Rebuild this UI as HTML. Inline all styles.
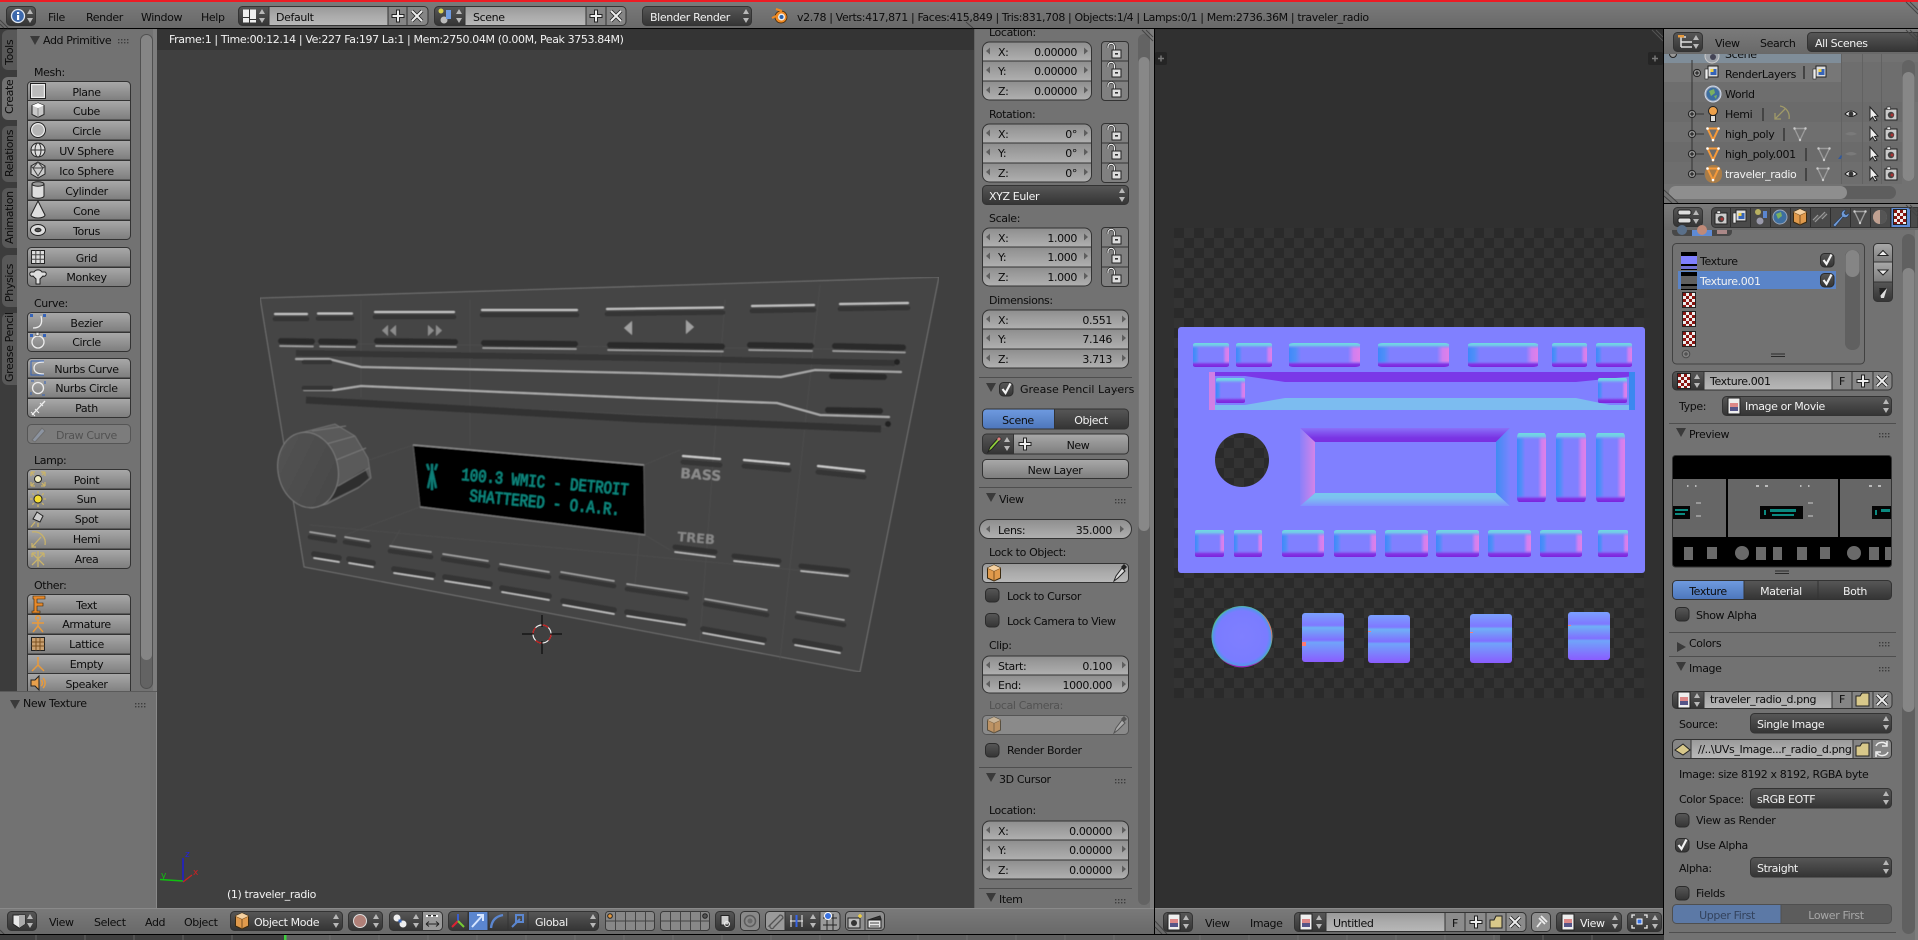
<!DOCTYPE html>
<html><head><meta charset="utf-8"><title>Blender</title>
<style>
html,body{margin:0;padding:0;background:#404040;overflow:hidden}
svg{display:block;width:1918px;height:940px}
text{font-family:"DejaVu Sans","Liberation Sans",sans-serif;font-size:11px;fill:#0c0c0c;letter-spacing:-.38px}
.w{fill:#f2f2f2}.g{fill:#525252}.m{text-anchor:middle}.e{text-anchor:end}
.sep{stroke:#4e4e4e;stroke-width:1;fill:none}
.ol{fill:none;stroke:#2e2e2e;stroke-width:1}
.hatch{stroke:#3a3a3a;stroke-width:1;fill:none}
.hi{stroke:#c2c2c2;stroke-width:2;fill:none;stroke-linecap:round}
.lo{stroke:#a4a4a4;stroke-width:1.4;fill:none;stroke-linecap:round}
.dk{stroke:#2a2a2a;stroke-width:6;fill:none;stroke-linecap:round}
.sd{stroke:#343434;stroke-width:4.5;fill:none;stroke-linecap:round}
.wire{stroke:#4e4e4e;stroke-width:.8;fill:none}
.lcd{font-family:"Liberation Mono","DejaVu Sans Mono",monospace;font-size:14px;fill:#0b8a80;stroke:#0b8a80;stroke-width:.35;letter-spacing:0}
.ti{fill:#3a3a3a}
.arr{fill:#5e5e5e}
.ic{stroke:#1c1c1c;stroke-width:1;fill:#dcdcdc}
.il{stroke:#eee;stroke-width:1.3;fill:none}
.iy{stroke:#c9b36a;stroke-width:1.3;fill:none}
.io{stroke:#e89a3c;stroke-width:1.5;fill:none}
</style></head><body>
<svg xmlns="http://www.w3.org/2000/svg" width="1918" height="940" viewBox="0 0 1918 940">
<defs>
<filter id="bl" x="0" y="0" width="1" height="1"><feGaussianBlur stdDeviation=".55"/></filter>
<linearGradient id="gb" x1="0" y1="0" x2="0" y2="1"><stop offset="0" stop-color="#a9a9a9"/><stop offset="1" stop-color="#7d7d7d"/></linearGradient>
<linearGradient id="gn" x1="0" y1="0" x2="0" y2="1"><stop offset="0" stop-color="#999"/><stop offset=".5" stop-color="#ababab"/><stop offset="1" stop-color="#b8b8b8"/></linearGradient>
<linearGradient id="gd" x1="0" y1="0" x2="0" y2="1"><stop offset="0" stop-color="#575757"/><stop offset="1" stop-color="#343434"/></linearGradient>
<linearGradient id="gs" x1="0" y1="0" x2="0" y2="1"><stop offset="0" stop-color="#6f9be0"/><stop offset="1" stop-color="#4d76bb"/></linearGradient>
<linearGradient id="gh" x1="0" y1="0" x2="0" y2="1"><stop offset="0" stop-color="#7a7a7a"/><stop offset="1" stop-color="#696969"/></linearGradient>
<linearGradient id="gf" x1="0" y1="0" x2="0" y2="1"><stop offset="0" stop-color="#8e8e8e"/><stop offset="1" stop-color="#b0b0b0"/></linearGradient>
<linearGradient id="nh" x1="0" y1="0" x2="1" y2="0"><stop offset="0" stop-color="#3f88fa"/><stop offset=".09" stop-color="#4f8ff8"/><stop offset=".17" stop-color="#8080ff"/><stop offset=".83" stop-color="#8080ff"/><stop offset=".91" stop-color="#d07ff0"/><stop offset="1" stop-color="#e080e8"/></linearGradient>
<linearGradient id="nv" x1="0" y1="0" x2="0" y2="1"><stop offset="0" stop-color="#6fdce0"/><stop offset=".1" stop-color="#74c4ea"/><stop offset=".24" stop-color="#8080ff" stop-opacity="0"/><stop offset=".74" stop-color="#8080ff" stop-opacity="0"/><stop offset=".88" stop-color="#8436e4"/><stop offset="1" stop-color="#7a24dc"/></linearGradient>
<linearGradient id="nvt" x1="0" y1="0" x2="0" y2="1"><stop offset="0" stop-color="#6fdce0"/><stop offset=".05" stop-color="#74c4ea"/><stop offset=".1" stop-color="#8080ff" stop-opacity="0"/><stop offset=".9" stop-color="#8080ff" stop-opacity="0"/><stop offset=".95" stop-color="#8436e4"/><stop offset="1" stop-color="#7a24dc"/></linearGradient>
<linearGradient id="nht" x1="0" y1="0" x2="1" y2="0"><stop offset="0" stop-color="#3f88fa"/><stop offset=".14" stop-color="#4f8ff8"/><stop offset=".28" stop-color="#8080ff"/><stop offset=".72" stop-color="#8080ff"/><stop offset=".86" stop-color="#d07ff0"/><stop offset="1" stop-color="#e080e8"/></linearGradient>
<linearGradient id="ftop" x1="0" y1="0" x2="0" y2="1"><stop offset="0" stop-color="#8a70f8"/><stop offset=".7" stop-color="#7a34e4"/><stop offset="1" stop-color="#7a30e0"/></linearGradient>
<linearGradient id="fbot" x1="0" y1="1" x2="0" y2="0"><stop offset="0" stop-color="#8090ff"/><stop offset=".6" stop-color="#7cc0f0"/><stop offset="1" stop-color="#78c8ee"/></linearGradient>
<linearGradient id="fl" x1="0" y1="0" x2="1" y2="0"><stop offset="0" stop-color="#8a80fa"/><stop offset="1" stop-color="#d484e8"/></linearGradient>
<linearGradient id="fr" x1="1" y1="0" x2="0" y2="0"><stop offset="0" stop-color="#7a84ff"/><stop offset="1" stop-color="#3f8cf2"/></linearGradient>
<linearGradient id="blk" x1="0" y1="0" x2="0" y2="1"><stop offset="0" stop-color="#7aa0ff"/><stop offset=".25" stop-color="#7f78ff"/><stop offset=".3" stop-color="#6fb0f6"/><stop offset=".55" stop-color="#8070ff"/><stop offset=".6" stop-color="#70a4fa"/><stop offset="1" stop-color="#8a5cff"/></linearGradient>
<radialGradient id="knb" cx=".5" cy=".5" r=".5"><stop offset="0" stop-color="#7f7fff"/><stop offset=".84" stop-color="#7a7cff"/><stop offset=".94" stop-color="#5a90f0"/><stop offset="1" stop-color="#50b8a0"/></radialGradient>
<linearGradient id="kface" x1="0" y1="0" x2="1" y2="1"><stop offset="0" stop-color="#545454"/><stop offset="1" stop-color="#474747"/></linearGradient>
<pattern id="chk" width="20" height="20" patternUnits="userSpaceOnUse" x="1174" y="228"><rect width="20" height="20" fill="#333"/><rect width="10" height="10" fill="#2a2a2a"/><rect x="10" y="10" width="10" height="10" fill="#2a2a2a"/></pattern>
<symbol id="nb" viewBox="0 0 100 100" preserveAspectRatio="none" overflow="visible"><rect width="100" height="100" rx="7" fill="url(#nh)"/><rect width="100" height="100" rx="7" fill="url(#nv)"/></symbol>
<symbol id="nt" viewBox="0 0 100 100" preserveAspectRatio="none" overflow="visible"><rect width="100" height="100" rx="7" fill="url(#nht)"/><rect width="100" height="100" rx="7" fill="url(#nvt)"/></symbol>
<g id="la"><path class="arr" d="M4 -3.5 L0 0 4 3.5z"/></g>
<g id="ra"><path class="arr" d="M0 -3.5 L4 0 0 3.5z"/></g>
<g id="bt"><path d="M.5 20V4.5a4 4 0 0 1 4-4H99.5a4 4 0 0 1 4 4V20z" fill="url(#gb)" stroke="#333"/></g>
<g id="bm"><rect x=".5" y=".5" width="103" height="19.5" fill="url(#gb)" stroke="#333"/></g>
<g id="bb"><path d="M.5 .5V15.5a4 4 0 0 0 4 4H99.5a4 4 0 0 0 4-4V.5z" fill="url(#gb)" stroke="#333"/></g>
<g id="f3"><path d="M.5 20V8a7 7 0 0 1 7-7H102.5a7 7 0 0 1 7 7V20z" fill="url(#gf)" stroke="#333"/><rect x=".5" y="20" width="109" height="20" fill="url(#gf)" stroke="#333"/><path d="M.5 40V52a7 7 0 0 0 7 7H102.5a7 7 0 0 0 7-7V40z" fill="url(#gf)" stroke="#333"/>
<use href="#la" x="4" y="10"/><use href="#la" x="4" y="29"/><use href="#la" x="4" y="49"/><use href="#ra" x="102" y="10"/><use href="#ra" x="102" y="29"/><use href="#ra" x="102" y="49"/></g>
<g id="f3w"><path d="M.5 20V8a7 7 0 0 1 7-7H139.5a7 7 0 0 1 7 7V20z" fill="url(#gf)" stroke="#333"/><rect x=".5" y="20" width="146" height="20" fill="url(#gf)" stroke="#333"/><path d="M.5 40V52a7 7 0 0 0 7 7H139.5a7 7 0 0 0 7-7V40z" fill="url(#gf)" stroke="#333"/>
<use href="#la" x="4" y="10"/><use href="#la" x="4" y="29"/><use href="#la" x="4" y="49"/><use href="#ra" x="140" y="10"/><use href="#ra" x="140" y="29"/><use href="#ra" x="140" y="49"/></g>
<g id="f2w"><path d="M.5 20V8a7 7 0 0 1 7-7H139.5a7 7 0 0 1 7 7V20z" fill="url(#gf)" stroke="#333"/><path d="M.5 20V31a7 7 0 0 0 7 7H139.5a7 7 0 0 0 7-7V20z" fill="url(#gf)" stroke="#333"/>
<use href="#la" x="4" y="10"/><use href="#la" x="4" y="29"/><use href="#ra" x="140" y="10"/><use href="#ra" x="140" y="29"/></g>
<g id="lk"><path d="M-6 -4V-5.500a3.200 3.200 0 0 1 6.400 0V-2" fill="none" stroke="#222" stroke-width="2.400"/><path d="M-6 -4V-5.500a3.200 3.200 0 0 1 6.400 0V-2" fill="none" stroke="#eee" stroke-width="1.200"/><rect x="-2" y="-2" width="9" height="8" fill="#ddd" stroke="#222"/><rect x="1" y="1" width="3" height="1.6" fill="#333"/></g>
<g id="l3"><path d="M.5 20V4a3.500 3.500 0 0 1 3.500-3.500H24a3.500 3.500 0 0 1 3.500 3.500V20z" fill="#808080" stroke="#333"/><rect x=".5" y="20" width="27" height="20" fill="#808080" stroke="#333"/><path d="M.5 40V56a3.500 3.500 0 0 0 3.500 3.500H24a3.500 3.500 0 0 0 3.500-3.500V40z" fill="#808080" stroke="#333"/><use href="#lk" x="13" y="11"/><use href="#lk" x="13" y="30"/><use href="#lk" x="13" y="50"/></g>
<g id="ud"><path fill="#b8b8b8" d="M0-2 L3-7 6-2z"/><path fill="#b8b8b8" d="M0 2 L3 7 6 2z"/></g>
<g id="tri"><path class="ti" d="M0 -5 H10 L5 4z"/></g>
<g id="grip" fill="#3d3d3d"><rect x="0" y="0" width="1.4" height="1.4"/><rect x="3" y="0" width="1.4" height="1.4"/><rect x="6" y="0" width="1.4" height="1.4"/><rect x="9" y="0" width="1.4" height="1.4"/><rect x="0" y="3" width="1.4" height="1.4"/><rect x="3" y="3" width="1.4" height="1.4"/><rect x="6" y="3" width="1.4" height="1.4"/><rect x="9" y="3" width="1.4" height="1.4"/></g>
<g id="cb"><rect x=".5" y=".5" width="13.5" height="13.5" rx="4" fill="url(#gd)" stroke="#2b2b2b"/></g>
<g id="ck"><path d="M3.500 7 L6.500 11 L11.500 1.500" fill="none" stroke="#f2f2f2" stroke-width="2.200"/></g>
<g id="plus"><path d="M-6-1.500H-1.500V-6H1.500V-1.500H6V1.500H1.500V6H-1.500V1.500H-6z" fill="#eee" stroke="#222"/></g>
<g id="xx"><path d="M-5-5 L5 5 M5-5 L-5 5" stroke="#222" stroke-width="3.600"/><path d="M-5-5 L5 5 M5-5 L-5 5" stroke="#eee" stroke-width="2"/></g>
<g id="tex"><rect x="-6.500" y="-7.500" width="13" height="15" fill="#eee" stroke="#222"/><path fill="#8a1410" d="M-6-7h3v3h-3zM0-7h3v3H0zM-3-4h3v3h-3zM3-4h3v3H3zM-6-1h3v3h-3zM0-1h3v3H0zM-3 2h3v3h-3zM3 2h3v3H3zM-6 5h3v2h-3zM0 5h3v2H0z"/></g>
<g id="img"><rect x="-6" y="-8" width="12" height="16" fill="#eee" stroke="#222"/><rect x="-4" y="-3" width="8" height="4" fill="#d88"/><rect x="-4" y="1" width="8" height="4" fill="#558"/></g>
<g id="cube"><path d="M0-8 L6.500-5 V5 L0 8 -6.500 5 V-5z" fill="#e09a4c" stroke="#3a2a10"/><path d="M0-2 L6.500-5 M0-2 L-6.500-5 M0-2V8" stroke="#7a5020" fill="none"/><path d="M0-8 L6.500-5 0-2 -6.500-5z" fill="#f4d0a0"/></g>
<g id="eye"><path d="M-6 0 Q0-6 6 0 Q0 5-6 0z" fill="#eee" stroke="#222"/><circle r="2.400" fill="#333"/></g>
<g id="eyed"><path d="M-6 0 Q0-4 6 0 Q0 3-6 0z" fill="#7a7a7a"/></g>
<g id="curs"><path d="M-3-7 V6 L-.5 3 2 7 4 6 1.500 2.500 5 2z" fill="#eee" stroke="#222"/></g>
<g id="cam"><rect x="-6" y="-5" width="12" height="11" fill="#ccc" stroke="#222"/><circle cy="1" r="3.200" fill="#444"/><circle cx="1" cy="1" r="1.500" fill="#a33"/><rect x="-4" y="-7" width="3.500" height="2.500" fill="#eee" stroke="#222" stroke-width=".6"/></g>
<g id="tro"><path d="M-5.500-5.500 H5.500 L0 6z" fill="none" stroke="#f59a3a" stroke-width="2"/><circle cx="-5.500" cy="-5.500" r="1.300" fill="#fff"/><circle cx="5.500" cy="-5.500" r="1.300" fill="#fff"/><circle cy="6" r="1.300" fill="#fff"/></g>
<g id="trg"><path d="M-5.500-5.500 H5.500 L0 6z" fill="none" stroke="#9a9a9a" stroke-width="1.400"/><circle cx="-5.500" cy="-5.500" r="1.200" fill="#ccc"/><circle cx="5.500" cy="-5.500" r="1.200" fill="#ccc"/><circle cy="6" r="1.200" fill="#ccc"/></g>
<g id="exp"><circle r="3.600" fill="#9a9a9a" stroke="#222"/><path d="M-2.200 0H2.200M0-2.200V2.200" stroke="#111"/></g>
<g id="eb"><rect x="-5" y="-7" width="10" height="11" fill="#ddd" stroke="#222"/><rect x="-2.500" y="-4" width="6" height="6" fill="#3664b8"/><rect x="-2.500" y="-4" width="3" height="3" fill="#f0d040"/><rect x="-8" y="-4" width="3" height="10" fill="#eee" stroke="#222" stroke-width=".6"/></g>
</defs>

<!-- left panel -->
<rect x="0" y="29" width="157" height="879" fill="#727272"/>
<rect x="0" y="29" width="17" height="663" fill="#3c3c3c"/>
<g fill="#585858"><path d="M17 30 H8a6 6 0 0 0-6 6 V64a6 6 0 0 0 6 6H17z"/><path d="M17 126 H8a6 6 0 0 0-6 6 V176a6 6 0 0 0 6 6H17z"/><path d="M17 188 H8a6 6 0 0 0-6 6 V242a6 6 0 0 0 6 6H17z"/><path d="M17 255 H8a6 6 0 0 0-6 6 V301a6 6 0 0 0 6 6H17z"/><path d="M17 313 H8a6 6 0 0 0-6 6 V379a6 6 0 0 0 6 6H17z"/></g>
<path d="M18 77 H8a6 6 0 0 0-6 6 V114a6 6 0 0 0 6 6H18z" fill="#727272"/>
<g>
<text transform="translate(13,65) rotate(-90)">Tools</text>
<text transform="translate(13,114) rotate(-90)">Create</text>
<text transform="translate(13,177) rotate(-90)">Relations</text>
<text transform="translate(13,244) rotate(-90)">Animation</text>
<text transform="translate(13,302) rotate(-90)">Physics</text>
<text transform="translate(13,382) rotate(-90)">Grease Pencil</text>
</g>
<rect x="140.500" y="34.500" width="12" height="654" rx="6" fill="#636363" stroke="#505050"/>
<rect x="141" y="35" width="11" height="625" rx="5.500" fill="#858585"/>
<rect x="153" y="29" width="4" height="663" fill="#7d7d7d"/>
<use href="#tri" x="30" y="41"/>
<text x="43" y="44">Add Primitive</text>
<use href="#grip" x="118" y="39"/>
<text x="34" y="76">Mesh:</text>
<use href="#bt" x="27" y="81"/><use href="#bm" x="27" y="100"/><use href="#bm" x="27" y="120"/><use href="#bm" x="27" y="140"/><use href="#bm" x="27" y="160"/><use href="#bm" x="27" y="180"/><use href="#bm" x="27" y="200"/><use href="#bb" x="27" y="220"/>
<use href="#bt" x="27" y="247"/><use href="#bb" x="27" y="267"/>
<text x="34" y="307">Curve:</text>
<use href="#bt" x="27" y="312"/><use href="#bb" x="27" y="332"/>
<use href="#bt" x="27" y="358"/><use href="#bm" x="27" y="378"/><use href="#bb" x="27" y="398"/>
<rect x="27.500" y="424.500" width="103" height="19" rx="4" fill="#7c7c7c" stroke="#555"/>
<text x="34" y="464">Lamp:</text>
<use href="#bt" x="27" y="469"/><use href="#bm" x="27" y="489"/><use href="#bm" x="27" y="509"/><use href="#bm" x="27" y="529"/><use href="#bb" x="27" y="549"/>
<text x="34" y="589">Other:</text>
<use href="#bt" x="27" y="594"/><use href="#bm" x="27" y="614"/><use href="#bm" x="27" y="634"/><use href="#bm" x="27" y="654"/><use href="#bm" x="27" y="673"/>
<g class="m" text-anchor="middle">
<text x="86.500" y="96">Plane</text><text x="86.500" y="115">Cube</text><text x="86.500" y="135">Circle</text><text x="86.500" y="155">UV Sphere</text><text x="86.500" y="175">Ico Sphere</text><text x="86.500" y="195">Cylinder</text><text x="86.500" y="215">Cone</text><text x="86.500" y="235">Torus</text>
<text x="86.500" y="262">Grid</text><text x="86.500" y="281">Monkey</text>
<text x="86.500" y="327">Bezier</text><text x="86.500" y="346">Circle</text>
<text x="86.500" y="373">Nurbs Curve</text><text x="86.500" y="392">Nurbs Circle</text><text x="86.500" y="412">Path</text>
<text x="86.500" y="439" class="g">Draw Curve</text>
<text x="86.500" y="484">Point</text><text x="86.500" y="503">Sun</text><text x="86.500" y="523">Spot</text><text x="86.500" y="543">Hemi</text><text x="86.500" y="563">Area</text>
<text x="86.500" y="609">Text</text><text x="86.500" y="628">Armature</text><text x="86.500" y="648">Lattice</text><text x="86.500" y="668">Empty</text><text x="86.500" y="688">Speaker</text>
</g>
<!-- tool icons -->
<g transform="translate(38,91)"><rect x="-6.500" y="-6.500" width="13" height="13" fill="#bbb" stroke="#eee" stroke-width="1.400"/><rect x="-7.500" y="-7.500" width="15" height="15" fill="none" stroke="#222"/></g>
<g transform="translate(38,110)"><path d="M0-7 L6-4.500 V4.500 L0 7.500 -6 4.500 V-4.500z" fill="#c8c8c8" stroke="#222"/><path d="M0-7 L6-4.500 0-2 -6-4.500z" fill="#fff"/><path d="M0-2V7.500" stroke="#888"/></g>
<g transform="translate(38,130)"><circle r="6.500" fill="#b5b5b5" stroke="#eee" stroke-width="1.500"/><circle r="7.500" fill="none" stroke="#222"/></g>
<g transform="translate(38,150)"><circle r="7" fill="#ddd" stroke="#222"/><ellipse rx="3" ry="7" fill="none" stroke="#333"/><path d="M-7 0H7" stroke="#333"/></g>
<g transform="translate(38,170)"><path d="M0-8 L7-4 V4 L0 8 -7 4 V-4z" fill="#ccc" stroke="#222"/><path d="M-5-2H5L0 6z M-7-4 L-5-2 M7-4 L5-2 M0-8 L-5-2 M0-8 L5-2" fill="none" stroke="#444"/></g>
<g transform="translate(38,190)"><path d="M-6-6V6a6 2.200 0 0 0 12 0V-6" fill="#ddd" stroke="#222"/><ellipse cy="-6" rx="6" ry="2.200" fill="#999" stroke="#222"/></g>
<g transform="translate(38,210)"><path d="M0-9 L7 5a7 3 0 0 1-14 0z" fill="#ddd" stroke="#222"/></g>
<g transform="translate(38,230)"><ellipse rx="7.500" ry="5.500" fill="#ddd" stroke="#222"/><ellipse rx="3" ry="1.700" fill="#555" stroke="#222"/></g>
<g transform="translate(38,257)"><rect x="-6.500" y="-6.500" width="13" height="13" fill="#ddd" stroke="#222"/><path d="M-2.200-6.500V6.500M2.200-6.500V6.500M-6.500-2.200H6.500M-6.500 2.200H6.500" stroke="#444"/></g>
<g transform="translate(38,277)"><path d="M-4-5a4.500 4 0 0 1 8 0 H7a2 2 0 0 1-2 4 L2 2 V7h-4V2 L-5-1a2 2 0 0 1-2-4z" fill="#ddd" stroke="#222"/></g>
<g transform="translate(38,322)"><path d="M-5 6 Q6 6 3-6" class="il"/><rect x="-8" y="-8" width="3" height="3" fill="#3664b8"/><rect x="5" y="-8" width="3" height="3" fill="#3664b8"/></g>
<g transform="translate(38,342)"><circle r="6" class="il"/><rect x="-8" y="-8" width="3" height="3" fill="#3664b8"/><rect x="5" y="-8" width="3" height="3" fill="#3664b8"/><rect x="-2" y="-9.500" width="3" height="3" fill="#eee" stroke="#222" stroke-width=".5"/></g>
<g transform="translate(38,368)"><path d="M6-6 Q-4-6-4 0 T6 6" class="il"/><path d="M-7-7H6M-7-7V7H6" stroke="#3664b8" fill="none"/></g>
<g transform="translate(38,388)"><circle r="5.500" class="il"/><path d="M-7-7H7V7H-7z" stroke="#3664b8" stroke-dasharray="3 11" fill="none"/></g>
<g transform="translate(38,408)"><path d="M-6 7 L7-7" class="il"/><path d="M-7 4 L-3 8 M-3 1 L1 5 M2-5 L5-2" stroke="#eee" fill="none"/></g>
<g transform="translate(38,434)" opacity=".55"><path d="M-6 6 L4-6 7-3 -3 8z" fill="#9aa8c0" stroke="#666"/></g>
<g transform="translate(38,479)"><circle r="3.500" fill="#f2eec0" stroke="#222"/><path d="M-7-7 L-4-4M7-7 L4-4M-7 7 L-4 4M7 7 L4 4M-7-7h4M-7-7v4M7-7h-4M7-7v4M-7 7h4M-7 7v-4M7 7h-4M7 7v-4" class="iy"/></g>
<g transform="translate(38,499)"><circle r="4" fill="#f4dc30" stroke="#222"/><path d="M0-8V-5.500M0 8V5.500M-8 0H-5.500M8 0H5.500M-5.700-5.700 L-4-4M5.700-5.700 L4-4M-5.700 5.700 L-4 4M5.700 5.700 L4 4" class="iy"/></g>
<g transform="translate(38,519)"><path d="M-1-7 L5-3 2 3 -5 0z" fill="#ccc" stroke="#222"/><path d="M-3 3 L-7 8M0 4 L0 8" class="iy"/></g>
<g transform="translate(38,539)"><path d="M-6-7 A11 11 0 0 1 7 6" class="iy" stroke-width="1.800"/><path d="M-6 8 L3-2M-6 4V8H-2" class="iy"/></g>
<g transform="translate(38,559)"><path d="M-6-6 L0 0 6-6M-6 6 L0 0 6 6M0 8V-8M-6-6h4M-6-6v4M6-6h-4M6-6v4" class="iy"/></g>
<g transform="translate(38,604)"><path d="M-5-8H7V-5H-1V-1H5V2H-1V7H2V9H-6V7H-4V-5H-5z" fill="#e88a2c" stroke="#3a2000" stroke-width=".6"/></g>
<g transform="translate(38,624)"><circle cy="-6" r="2.300" class="io"/><path d="M0-3V2 L-5 8M0 2 L5 8M-6-1H6" class="io"/></g>
<g transform="translate(38,644)"><rect x="-6.500" y="-6.500" width="13" height="13" fill="#c9a070" stroke="#222"/><path d="M-2-6.500V6.500M2-6.500V6.500M-6.500-2H6.500M-6.500 2H6.500" stroke="#7a5020"/></g>
<g transform="translate(38,664)"><path d="M0-7V1 L-6 7M0 1 L6 7" class="io" stroke-width="2"/></g>
<g transform="translate(38,683)"><path d="M-7-3H-3L1-7V7L-3 3H-7z" fill="#e8a04c" stroke="#222"/><path d="M3-3a4 4 0 0 1 0 6M5-5a7 7 0 0 1 0 10" class="io" stroke-width="1.100"/></g>
<!-- lower-left panel -->
<rect x="0" y="692" width="157" height="216" fill="#727272"/>
<rect x="0" y="691" width="157" height="1" fill="#5a5a5a"/>
<rect x="156" y="692" width="1" height="216" fill="#8a8a8a"/>
<use href="#tri" x="10" y="705"/>
<text x="23" y="707">New Texture</text>
<use href="#grip" x="135" y="703"/>

<!-- 3D viewport -->
<rect x="157" y="29" width="817" height="879" fill="#404040"/>
<rect x="157" y="29" width="817" height="21" fill="#343434"/>
<text x="169" y="43" class="w">Frame:1 | Time:00:12.14 | Ve:227 Fa:197 La:1 | Mem:2750.04M (0.00M, Peak 3753.84M)</text>
<!-- Radio mesh -->
<g filter="url(#bl)">
<polygon points="260,298 939,277 860,672 304,567" fill="#454545" stroke="#7c7c7c" stroke-width=".8"/>
<g class="wire">
<path d="M296 352 L902 362M306 398 L888 427M280 343 L905 350M310 525 L850 575M413 445 L340 470M420 507 L345 535M361 300 V397M470 445 L470 300M644 465 L680 450M645 535 L670 550M725 300 L700 640M820 285 L780 660M390 547 L400 530M640 530 L635 585"/>
</g>
<!-- top-row buttons -->
<path class="dk" d="M281 341 L312 341.500M321 341.500 L355 342M377 341 L455 342M484 343 L575 344M610 345 L722 346.500M750 345 L811 346M835 346 L903 347.500"/>
<path class="lo" d="M280 346 L313 346.500M320 346.500 L355 347M376 346 L456 347M483 348 L576 349M608 350 L723 351.500M749 350 L812 351M833 351 L905 352.500"/>
<path class="sd" d="M275 319 L307 319M318 318.500 L352 318.500M375 317 L454 317M482 315 L577 315M607 314 L723 312.500M752 311 L814 310M840 309 L908 308"/>
<path class="hi" d="M275 314 L307 314M318 313.500 L352 313.500M375 312 L454 312M482 310 L577 310M607 309 L723 307.500M752 306 L814 305M840 304 L908 303"/>
<path d="M388 325 v11 l-6-5.500zM396 325 v11 l-6-5.500zM428 325 l6 5.500-6 5.500zM436 325 l6 5.500-6 5.500z" fill="#8c8c8c"/>
<path d="M632 321 v14 l-8-7zM686 320 l8 7-8 7z" fill="#a0a0a0"/>
<!-- CD slots -->
<path d="M296 353 L640 358 L895 363" stroke="#363636" stroke-width="6" fill="none"/>
<path class="hi" d="M296 359 L329 359 L361 367 L640 373 L781 377 L815 370 L901 372" style="stroke:#a8a8a8"/>
<path class="hi" d="M304 390 L335 390 L361 386 L640 398 L777 403 L820 415 L889 417" style="stroke:#acacac"/>
<path d="M306 400 L640 419 L881 429" stroke="#323232" stroke-width="7" fill="none"/>
<path class="sd" d="M304 362 L330 362M304 388 L331 388"/>
<path class="dk" d="M832 376 L884 377M828 410 L880 411"/>
<circle cx="897" cy="362" r="3" fill="#242424"/><circle cx="888" cy="424" r="3" fill="#242424"/>
<!-- knob -->
<path d="M300 433 L335 424 L355 436 L368 458 L371 478 L358 488 L327 504 L312 508z" fill="#5a5a5a" stroke="#787878" stroke-width=".8"/>
<path d="M325 503 L360 486 L369 478 L365 469 L338 486z" fill="#2e2e2e"/>
<path d="M312 431 L346 426 M319 446 L355 436 M326 464 L366 448 M338 486 L369 468" stroke="#777" fill="none"/>
<ellipse cx="308" cy="470" rx="30" ry="38" transform="rotate(-12 308 470)" fill="url(#kface)" stroke="#7e7e7e" stroke-width=".9"/>
<!-- display -->
<polygon points="413,445 644,465 645,535 420,507" fill="#030303" stroke="#5c5c5c" stroke-width="1"/>
<path d="M413 445 L644 465" stroke="#8a8a8a" stroke-width="1.400"/>
<path d="M420 507 L645 535" stroke="#777" stroke-width="1.400"/>
<text class="lcd" transform="translate(461,480) rotate(5.200) scale(1,1.250)">100.3 WMIC - DETROIT</text>
<text class="lcd" transform="translate(469,501) rotate(5.400) scale(1,1.250)">SHATTERED - O.A.R.</text>
<path d="M432 464 V490 M428 488 L432 470 436 488 M427 464 l2 6 M437 464 l-2 6" stroke="#0a7f78" stroke-width="2" fill="none"/>
<!-- tall buttons -->
<path class="dk" d="M683 462 L720 465M744 466 L789 470M818 472 L864 477" style="stroke-width:5;stroke:#363636"/>
<path class="hi" d="M683 456 L720 459M744 460 L789 464M818 466 L864 471" style="stroke:#cecece"/>
<path class="dk" d="M675 547 L715 552M734 556 L779 561M801 566 L848 571" style="stroke-width:5;stroke:#303030"/>
<path class="lo" d="M675 552 L715 557M734 561 L779 566M801 571 L848 576" style="stroke:#bcbcbc"/>
<text x="680" y="478" style="font-size:14px;font-weight:bold;fill:#8c8c8c;letter-spacing:0" transform="rotate(4 680 478)">BASS</text>
<text x="677" y="541" style="font-size:13px;font-weight:bold;fill:#888;letter-spacing:0" transform="rotate(5 677 541)">TREB</text>
<!-- bottom buttons -->
<path class="sd" d="M310 537 L335 541M345 542 L369 546M390 551 L431 557M443 559 L488 566M500 569 L549 577M561 577 L614 586M627 589 L687 598M705 604 L767 615M797 617 L844 625"/>
<path class="lo" d="M310 532 L335 536M345 537 L369 541M390 546 L431 552M443 554 L488 561M500 564 L549 572M561 572 L614 581M627 584 L687 593M705 599 L767 610M797 612 L844 620"/>
<path class="sd" d="M314 554 L339 558M349 559 L373 563M394 569 L433 575M445 577 L490 584M502 588 L549 596M563 601 L614 610M627 612 L685 621M703 629 L764 640M795 641 L840 649" style="stroke-width:5.500"/>
<path class="lo" d="M314 558 L339 562M349 563 L373 567M394 573 L433 579M445 581 L490 588M502 592 L549 600M563 605 L614 614M627 616 L685 625M703 633 L764 644M795 645 L840 653" style="stroke:#c4c4c4"/>
</g>
<!-- 3D cursor -->
<g><circle cx="542" cy="634" r="9" fill="none" stroke="#f0f0f0" stroke-width="1.200"/><circle cx="542" cy="634" r="9" fill="none" stroke="#c01818" stroke-width="1.200" stroke-dasharray="7 7"/><path d="M542 615 V627 M542 641 V654 M522 634 H534 M550 634 H562" stroke="#000" stroke-width="1"/></g>
<!-- axis -->
<path d="M183 882 V858" stroke="#1a1ae0" stroke-width="1.400"/><path d="M183 881 L160 879.500" stroke="#10c010" stroke-width="1.400"/><path d="M183 882 L192 875" stroke="#d02020" stroke-width="1.200"/>
<text x="185" y="857" style="font-size:9px;fill:#2222dd">z</text><text x="161" y="878" style="font-size:9px;fill:#10c010">y</text><text x="193" y="875" style="font-size:9px;fill:#d02020">x</text>
<text x="227" y="898" class="w">(1) traveler_radio</text>

<!-- N panel -->
<rect x="974" y="29" width="180" height="879" fill="#727272"/>
<rect x="974" y="29" width="1" height="879" fill="#626262"/>
<rect x="1138" y="34" width="12" height="871" rx="6" fill="#636363"/>
<rect x="1138.500" y="57" width="11" height="474" rx="5.500" fill="#888"/>
<rect x="1150" y="29" width="4" height="879" fill="#7d7d7d"/>
<path class="hatch" d="M1142 30 L1153 41M1146 30 L1153 37" style="stroke:#444"/>
<text x="989" y="36">Location:</text>
<use href="#f3" x="982" y="41"/><use href="#l3" x="1101" y="41"/>
<text x="998" y="56">X:</text><text x="1077" y="56" class="e">0.00000</text>
<text x="998" y="75">Y:</text><text x="1077" y="75" class="e">0.00000</text>
<text x="998" y="95">Z:</text><text x="1077" y="95" class="e">0.00000</text>
<text x="989" y="118">Rotation:</text>
<use href="#f3" x="982" y="123"/><use href="#l3" x="1101" y="123"/>
<text x="998" y="138">X:</text><text x="1077" y="138" class="e">0°</text>
<text x="998" y="157">Y:</text><text x="1077" y="157" class="e">0°</text>
<text x="998" y="177">Z:</text><text x="1077" y="177" class="e">0°</text>
<rect x="982.500" y="185.500" width="146" height="19" rx="4" fill="url(#gd)" stroke="#333"/>
<text x="989" y="200" class="w">XYZ Euler</text><use href="#ud" x="1119" y="195"/>
<text x="989" y="222">Scale:</text>
<use href="#f3" x="982" y="227"/><use href="#l3" x="1101" y="227"/>
<text x="998" y="242">X:</text><text x="1077" y="242" class="e">1.000</text>
<text x="998" y="261">Y:</text><text x="1077" y="261" class="e">1.000</text>
<text x="998" y="281">Z:</text><text x="1077" y="281" class="e">1.000</text>
<text x="989" y="304">Dimensions:</text>
<use href="#f3w" x="982" y="309"/>
<text x="998" y="324">X:</text><text x="1112" y="324" class="e">0.551</text>
<text x="998" y="343">Y:</text><text x="1112" y="343" class="e">7.146</text>
<text x="998" y="363">Z:</text><text x="1112" y="363" class="e">3.713</text>
<path class="sep" d="M979 377.500H1132"/>
<use href="#tri" x="986" y="388"/><use href="#cb" x="999" y="382"/><use href="#ck" x="999" y="382"/>
<text x="1020" y="393" style="letter-spacing:0">Grease Pencil Layers</text>
<use href="#grip" x="1116" y="387"/>
<path d="M982.500 413a4 4 0 0 1 4-4H1054.500V429H986.500a4 4 0 0 1-4-4z" fill="url(#gs)" stroke="#333"/>
<path d="M1128.500 413a4 4 0 0 0-4-4H1054.500V429H1124.500a4 4 0 0 0 4-4z" fill="url(#gd)" stroke="#333"/>
<text x="1018" y="424" class="m">Scene</text><text x="1091" y="424" class="m w">Object</text>
<path d="M982.500 438a4 4 0 0 1 4-4H1013.500V454H986.500a4 4 0 0 1-4-4z" fill="url(#gd)" stroke="#333"/>
<path d="M1128.500 438a4 4 0 0 0-4-4H1013.500V454H1124.500a4 4 0 0 0 4-4z" fill="url(#gb)" stroke="#333"/>
<path d="M988 452 L990 447 999 437 1001 439 992 449z" fill="#8fce3a" stroke="#222"/><path d="M997 439 L999 437 1001 439 999 441z" fill="#e08080"/>
<use href="#ud" x="1004" y="444"/><use href="#plus" x="1025" y="444"/>
<text x="1078" y="449" class="m">New</text>
<rect x="982.500" y="459.500" width="146" height="19" rx="4" fill="url(#gb)" stroke="#333"/>
<text x="1055" y="474" class="m">New Layer</text>
<path class="sep" d="M979 487.500H1132"/>
<use href="#tri" x="986" y="498"/><text x="999" y="503">View</text><use href="#grip" x="1115" y="499"/>
<path d="M989 519.500H1122a9.500 9.500 0 0 1 0 19H989a9.500 9.500 0 0 1 0-19z" fill="url(#gf)" stroke="#333"/>
<use href="#la" x="986" y="529"/><use href="#ra" x="1120" y="529"/>
<text x="998" y="534">Lens:</text><text x="1112" y="534" class="e">35.000</text>
<text x="989" y="556">Lock to Object:</text>
<rect x="982.500" y="563.500" width="146" height="19" rx="4" fill="url(#gn)" stroke="#333"/>
<use href="#cube" x="994" y="573"/>
<path d="M1114 581 L1116 576 1122 568 1125 571 1118 578z" fill="#ddd" stroke="#222"/><path d="M1121 567 L1124 564 1127 567 1124 570z" fill="#222"/>
<use href="#cb" x="985" y="588"/><text x="1007" y="600">Lock to Cursor</text>
<use href="#cb" x="985" y="613"/><text x="1007" y="625">Lock Camera to View</text>
<text x="989" y="649">Clip:</text>
<use href="#f2w" x="982" y="655"/>
<text x="998" y="670">Start:</text><text x="1112" y="670" class="e">0.100</text>
<text x="998" y="689">End:</text><text x="1112" y="689" class="e">1000.000</text>
<text x="989" y="709" class="g">Local Camera:</text>
<rect x="982.500" y="715.500" width="146" height="19" rx="4" fill="#8a8a8a" stroke="#555"/>
<use href="#cube" x="994" y="725" opacity=".6"/>
<path d="M1114 733 L1116 728 1122 720 1125 723 1118 730z" fill="#aaa" stroke="#555"/><path d="M1121 719 L1124 716 1127 719 1124 722z" fill="#555"/>
<use href="#cb" x="985" y="743"/><text x="1007" y="754">Render Border</text>
<path class="sep" d="M979 767.500H1132"/>
<use href="#tri" x="986" y="778"/><text x="999" y="783">3D Cursor</text><use href="#grip" x="1115" y="779"/>
<text x="989" y="814">Location:</text>
<use href="#f3w" x="982" y="820"/>
<text x="998" y="835">X:</text><text x="1112" y="835" class="e">0.00000</text>
<text x="998" y="854">Y:</text><text x="1112" y="854" class="e">0.00000</text>
<text x="998" y="874">Z:</text><text x="1112" y="874" class="e">0.00000</text>
<path class="sep" d="M979 888.500H1132"/>
<use href="#tri" x="986" y="898"/><text x="999" y="903">Item</text><use href="#grip" x="1115" y="899"/>

<!-- Image editor -->
<rect x="1155" y="29" width="509" height="879" fill="#303030"/>
<rect x="1174" y="228" width="470" height="470" fill="url(#chk)"/>
<rect x="1155" y="52" width="12" height="13" rx="2" fill="#252525"/><path d="M1158 58.500H1164M1161 55.500V61.500" stroke="#777" stroke-width="1.500"/>
<rect x="1648" y="52" width="15" height="13" rx="2" fill="#252525"/><path d="M1652 58.500H1658M1655 55.500V61.500" stroke="#777" stroke-width="1.500"/>
<path class="hatch" d="M1652 30 L1663 41M1656 30 L1663 37" style="stroke:#555"/>
<rect x="1178" y="327" width="467" height="246" rx="3" fill="#8080ff"/>
<!-- slot -->
<polygon points="1209,372 1635,372 1635,376 1576,382 1285,382 1245,376 1209,376" fill="#7a38e8"/>
<polygon points="1209,410 1635,410 1635,405 1610,405 1576,398 1285,398 1245,405 1209,405" fill="#7cbcf0"/>
<rect x="1209" y="372" width="6" height="38" fill="#d080e4"/><rect x="1629" y="372" width="6" height="38" fill="#3a88f0"/>
<use href="#nb" x="1193" y="343" width="36" height="24"/><use href="#nb" x="1236" y="343" width="36" height="24"/><use href="#nb" x="1289" y="343" width="71" height="24"/><use href="#nb" x="1378" y="343" width="71" height="24"/><use href="#nb" x="1468" y="343" width="70" height="24"/><use href="#nb" x="1552" y="343" width="35" height="24"/><use href="#nb" x="1596" y="343" width="36" height="24"/>
<use href="#nb" x="1216" y="378" width="29" height="25"/><use href="#nb" x="1598" y="378" width="29" height="25"/>
<!-- display recess -->
<polygon points="1300,428 1510,428 1496,442 1315,442" fill="url(#ftop)"/>
<polygon points="1300,506 1510,506 1496,493 1315,493" fill="url(#fbot)"/>
<polygon points="1300,428 1315,442 1315,493 1300,506" fill="url(#fl)"/>
<polygon points="1510,428 1496,442 1496,493 1510,506" fill="url(#fr)"/>
<rect x="1315" y="442" width="181" height="51" rx="3" fill="#8080ff"/>
<use href="#nt" x="1517" y="433" width="29" height="69"/><use href="#nt" x="1556" y="433" width="30" height="69"/><use href="#nt" x="1596" y="433" width="29" height="69"/>
<use href="#nb" x="1195" y="530" width="29" height="27"/><use href="#nb" x="1234" y="530" width="28" height="27"/><use href="#nb" x="1282" y="530" width="42" height="27"/><use href="#nb" x="1334" y="530" width="42" height="27"/><use href="#nb" x="1385" y="530" width="43" height="27"/><use href="#nb" x="1436" y="530" width="43" height="27"/><use href="#nb" x="1488" y="530" width="43" height="27"/><use href="#nb" x="1540" y="530" width="42" height="27"/><use href="#nb" x="1598" y="530" width="30" height="27"/>
<circle cx="1242" cy="460" r="27" fill="url(#chk)"/>
<!-- knob + blocks -->
<circle cx="1242" cy="636.500" r="30.500" fill="url(#knb)"/>
<path d="M1220 658 A30.500 30.500 0 0 0 1264 658 A34 34 0 0 1 1220 658z" fill="#9a28c0"/>
<path d="M1260 612 A30.500 30.500 0 0 1 1271 645 A36 36 0 0 0 1260 612z" fill="#e07060"/>
<path d="M1212 630 A30.500 30.500 0 0 1 1230 608 A36 36 0 0 0 1212 630z" fill="#50c878"/>
<rect x="1302" y="613" width="42" height="49" rx="3" fill="url(#blk)"/><rect x="1368" y="615" width="42" height="48" rx="3" fill="url(#blk)"/><rect x="1470" y="614" width="42" height="49" rx="3" fill="url(#blk)"/><rect x="1568" y="612" width="42" height="48" rx="3" fill="url(#blk)"/>
<path d="M1302 642h4v4h-4zM1368 631h3v1h-3zM1470 632h3v1h-3zM1568 625h3v1h-3z" fill="#ff7a70"/>

<!-- bottom header 3D -->
<rect x="0" y="908" width="1154" height="26" fill="url(#gh)"/>
<rect x="0" y="908" width="1154" height="1" fill="#8a8a8a"/>
<rect x="7.500" y="911.500" width="29" height="19" rx="4" fill="url(#gd)" stroke="#333"/>
<g transform="translate(19,921)"><path d="M-6-6 H6 V3 L0 7 -6 3z" fill="#e8e8e8" stroke="#222"/><path d="M0-6V7 L6 3 V-6z" fill="#aaa"/></g><use href="#ud" x="27" y="921"/>
<text x="49" y="926">View</text><text x="94" y="926">Select</text><text x="145" y="926">Add</text><text x="184" y="926">Object</text>
<rect x="230.500" y="911.500" width="112" height="19" rx="4" fill="url(#gd)" stroke="#333"/><use href="#cube" x="242" y="921"/>
<text x="254" y="926" class="w">Object Mode</text><use href="#ud" x="333" y="921"/>
<rect x="348.500" y="911.500" width="34" height="19" rx="4" fill="url(#gd)" stroke="#333"/><circle cx="360" cy="921" r="6.500" fill="#b08078" stroke="#ddd"/><use href="#ud" x="373" y="921"/>
<path d="M389.500 915.500a4 4 0 0 1 4-4H422.500V930.500H393.500a4 4 0 0 1-4-4z" fill="url(#gd)" stroke="#333"/><path d="M442.500 915.500a4 4 0 0 0-4-4H422.500V930.500H438.500a4 4 0 0 0 4-4z" fill="#9a9a9a" stroke="#333"/>
<circle cx="397" cy="918" r="3.500" fill="#eee"/><circle cx="403" cy="924" r="3.500" fill="#eee"/><rect x="398.500" y="919.500" width="3" height="3" fill="#3664b8"/><use href="#ud" x="413" y="921"/>
<path d="M427 915.500h10M426 924H439M426 924 l3-2.500M426 924 l3 2.500M439 924 l-3-2.500M439 924 l-3 2.500" stroke="#222" fill="none"/><path d="M426 915h2v2h-2zM431 915h2v2h-2zM436 915h2v2h-2z" fill="#fff"/>
<path d="M448.500 915.500a4 4 0 0 1 4-4H468V930.500H452.500a4 4 0 0 1-4-4z" fill="url(#gd)" stroke="#333"/>
<rect x="468.500" y="911.500" width="19.500" height="19" fill="#5b86cf" stroke="#333"/><rect x="488" y="911.500" width="20" height="19" fill="url(#gd)" stroke="#333"/><rect x="508" y="911.500" width="20" height="19" fill="url(#gd)" stroke="#333"/>
<path d="M458 921 V914" stroke="#3a5ecc" stroke-width="2"/><path d="M458 921 L452 927" stroke="#d23" stroke-width="2"/><path d="M458 921 L464 927" stroke="#7c3" stroke-width="2"/>
<path d="M472 927 L482 916M477 915h6v6" stroke="#d7e6ff" stroke-width="2" fill="none"/><path d="M491 928 Q492 917 503 915" stroke="#5b86cf" stroke-width="2.400" fill="none"/><path d="M512 927 L520 919M516 915h7v7h-7z" stroke="#5b86cf" stroke-width="2" fill="none"/>
<path d="M528 911.500H594.500a4 4 0 0 1 4 4V926.500a4 4 0 0 1-4 4H528z" fill="url(#gd)" stroke="#333"/><text x="535" y="926" class="w">Global</text><use href="#ud" x="590" y="921"/>
<g fill="#888" stroke="#3a3a3a"><rect x="605.500" y="911.500" width="49" height="19" rx="3"/><rect x="660.500" y="911.500" width="49" height="19" rx="3"/></g>
<path d="M615.500 911.500V930.500M625.500 911.500V930.500M635.500 911.500V930.500M645.500 911.500V930.500M605.500 921H654.500M670.500 911.500V930.500M680.500 911.500V930.500M690.500 911.500V930.500M700.500 911.500V930.500M660.500 921H709.500" stroke="#444"/>
<circle cx="610" cy="916" r="2.300" fill="#e89a3c" stroke="#222"/><circle cx="705" cy="916" r="2.300" fill="#555" stroke="#222"/>
<rect x="715.500" y="911.500" width="19" height="19" rx="4" fill="url(#gd)" stroke="#333"/><path d="M721 915.500H729V925H721z" fill="#ccc" stroke="#222"/><circle cx="727" cy="924" r="2.500" fill="none" stroke="#eee"/>
<rect x="740.500" y="911.500" width="19" height="19" rx="4" fill="#8a8a8a" stroke="#333"/><circle cx="750" cy="921" r="5.500" fill="none" stroke="#5c5c5c" stroke-width="1.500"/><circle cx="750" cy="921" r="2.500" fill="#6a6a6a"/>
<path d="M765.500 915.500a4 4 0 0 1 4-4H785V930.500H769.500a4 4 0 0 1-4-4z" fill="#9a9a9a" stroke="#333"/><rect x="785" y="911.500" width="35" height="19" fill="url(#gd)" stroke="#333"/><path d="M840 915.500a4 4 0 0 0-4-4H820V930.500H836a4 4 0 0 0 4-4z" fill="#9a9a9a" stroke="#333"/>
<path d="M769 926 L780 915a3 3 0 0 1 3 3 L774 927a2 2 0 0 1-4-1z" fill="none" stroke="#555" stroke-width="1.300"/>
<path d="M790 921H803M791 915V927M802 915V927" stroke="#eee"/><path d="M796.500 915V927" stroke="#3664e8" stroke-width="2"/><use href="#ud" x="810" y="921"/>
<path d="M823 918H837M823 925H837M827 914V930M833 914V930" stroke="#222"/><circle cx="828" cy="916" r="3.500" fill="#3a72e0" stroke="#fff"/>
<path d="M845.500 915.500a4 4 0 0 1 4-4H865V930.500H849.500a4 4 0 0 1-4-4z" fill="#8e8e8e" stroke="#333"/><path d="M884.500 915.500a4 4 0 0 0-4-4H865V930.500H880.500a4 4 0 0 0 4-4z" fill="#8e8e8e" stroke="#333"/>
<g transform="translate(854,922)"><rect x="-6" y="-4" width="12" height="10" fill="#bbb" stroke="#222"/><circle cy="1" r="3" fill="#333"/><path d="M6-8V-4M4-6H8" stroke="#f0d040" stroke-width="1.500"/></g>
<g transform="translate(875,922)"><rect x="-7" y="-2" width="13" height="8" fill="#e8e8e8" stroke="#222"/><path d="M-7-2 L5-6 6-3z" fill="#333" stroke="#222"/><path d="M-5 1H4M-5 4H4" stroke="#444"/></g>

<!-- bottom header Image editor -->
<rect x="1155" y="908" width="509" height="26" fill="url(#gh)"/>
<rect x="1155" y="908" width="509" height="1" fill="#8a8a8a"/>
<rect x="1154" y="29" width="1" height="911" fill="#000"/>
<rect x="1163.500" y="912.500" width="29" height="19" rx="4" fill="url(#gd)" stroke="#333"/><use href="#img" x="1174" y="922"/><use href="#ud" x="1183" y="922"/>
<text x="1205" y="927">View</text><text x="1250" y="927">Image</text>
<path d="M1294.500 916.500a4 4 0 0 1 4-4H1326V931.500H1298.500a4 4 0 0 1-4-4z" fill="url(#gd)" stroke="#333"/><use href="#img" x="1306" y="922"/><use href="#ud" x="1316" y="922"/>
<rect x="1326" y="912.500" width="119" height="19" fill="url(#gn)" stroke="#333"/><text x="1333" y="927">Untitled</text>
<rect x="1445" y="912.500" width="20" height="19" fill="#8c8c8c" stroke="#333"/><text x="1455" y="927" class="m">F</text>
<rect x="1465" y="912.500" width="21" height="19" fill="#8c8c8c" stroke="#333"/><use href="#plus" x="1476" y="922"/>
<rect x="1486" y="912.500" width="20" height="19" fill="#8c8c8c" stroke="#333"/><path d="M1490 928 L1490 920 L1494 920 L1496 916 L1502 916 L1502 928z" fill="#d8c88a" stroke="#222"/>
<path d="M1506 912.500H1522a4 4 0 0 1 4 4V927.500a4 4 0 0 1-4 4H1506z" fill="#8c8c8c" stroke="#333"/><use href="#xx" x="1515" y="922"/>
<rect x="1531.500" y="912.500" width="19" height="19" rx="4" fill="#8e8e8e" stroke="#333"/><path d="M1537 927 L1541 922M1539 918 L1545 924M1541 916 L1547 922" stroke="#eee" stroke-width="1.800"/>
<rect x="1556.500" y="912.500" width="65" height="19" rx="4" fill="url(#gd)" stroke="#333"/><use href="#img" x="1568" y="922"/><text x="1580" y="927" class="w">View</text><use href="#ud" x="1612" y="922"/>
<rect x="1627.500" y="912.500" width="34" height="19" rx="4" fill="url(#gd)" stroke="#333"/><path d="M1632 918V915H1635M1644 915H1647V918M1632 925V928H1635M1644 928H1647V925" stroke="#eee" fill="none" stroke-width="1.300"/><rect x="1637" y="919" width="5" height="5" fill="#3a72e0" stroke="#fff"/><use href="#ud" x="1652" y="922"/>
<path class="hatch" d="M0 930 L8 938M0 934 L5 939M1155 921 L1167 934M1155 927 L1162 934" style="stroke:#444"/>

<!-- right column: outliner -->
<rect x="1664" y="29" width="254" height="911" fill="#727272"/>
<rect x="1664" y="62" width="254" height="40" fill="#6e6e6e"/>
<g fill="#777"><rect x="1664" y="62" width="177" height="20"/></g>
<rect x="1664" y="43" width="177" height="20" fill="#7f8d99"/>
<rect x="1664" y="102" width="177" height="20" fill="#6b6b6b"/>
<rect x="1664" y="122" width="238" height="20" fill="#6f6f6f"/>
<rect x="1664" y="142" width="238" height="20" fill="#6b6b6b"/>
<rect x="1664" y="162" width="238" height="22" fill="#6e6e6e"/>
<rect x="1841" y="102" width="61" height="20" fill="#6b6b6b"/>
<path d="M1841.500 54V184M1862.500 54V184M1881.500 54V184" stroke="#626262"/>
<path d="M1692 60V174M1692 114H1704M1692 134H1704M1692 154H1704M1692 174H1704" stroke="#333" fill="none"/>
<g transform="translate(1712,56)"><circle r="7" fill="#9aa0a8" stroke="#ccc"/><circle cx="1" cy="1" r="3" fill="#445"/></g>
<text x="1725" y="58">Scene</text>
<circle cx="1673" cy="54" r="3.500" fill="#999" stroke="#222"/>
<use href="#exp" x="1697" y="73"/><use href="#eb" x="1713" y="73"/><text x="1725" y="78">RenderLayers</text><rect x="1803" y="66" width="2" height="13" fill="#444"/><use href="#eb" x="1821" y="73"/>
<g transform="translate(1713,94)"><circle r="8" fill="#99a5b8" stroke="#cfd8e8"/><circle r="6.500" fill="#3d6ea0"/><path d="M-4-3 L1-5 2-1 -2 2zM1 2 L4 1 3 5z" fill="#7ab060"/></g><text x="1725" y="98">World</text>
<use href="#exp" x="1692" y="114"/>
<g transform="translate(1713,114)"><circle cy="-3" r="4.500" fill="#eda04a" stroke="#222"/><rect x="-2.500" y="1.500" width="5" height="6" fill="#ddd" stroke="#222"/></g>
<text x="1725" y="118">Hemi</text><rect x="1762" y="108" width="2" height="13" fill="#444"/>
<path d="M1775 119 L1785 109M1775 113V119H1781M1780 106 A11 11 0 0 1 1789 119" class="iy" style="stroke:#a09a68"/>
<use href="#exp" x="1692" y="134"/><use href="#tro" x="1713" y="134"/><text x="1725" y="138">high_poly</text><rect x="1783" y="128" width="2" height="13" fill="#444"/><use href="#trg" x="1800" y="134"/>
<use href="#exp" x="1692" y="154"/><use href="#tro" x="1713" y="154"/><text x="1725" y="158">high_poly.001</text><rect x="1805" y="148" width="2" height="13" fill="#444"/><use href="#trg" x="1824" y="154"/>
<path d="M1838 159 l3-4 1 1 -1 3z" fill="#335a9a"/>
<use href="#exp" x="1692" y="174"/><rect x="1705" y="165" width="17" height="18" rx="8" fill="#a87c48"/><use href="#tro" x="1713" y="174"/><text x="1725" y="178" class="w">traveler_radio</text><rect x="1805" y="168" width="2" height="13" fill="#444"/><use href="#trg" x="1823" y="174"/>
<use href="#eye" x="1851" y="114"/><use href="#eyed" x="1851" y="134"/><use href="#eyed" x="1851" y="154"/><use href="#eye" x="1851" y="174"/>
<use href="#curs" x="1873" y="114"/><use href="#curs" x="1873" y="134"/><use href="#curs" x="1873" y="154"/><use href="#curs" x="1873" y="174"/>
<use href="#cam" x="1891" y="114"/><use href="#cam" x="1891" y="134"/><use href="#cam" x="1891" y="154"/><use href="#cam" x="1891" y="174"/>
<rect x="1902" y="60" width="13" height="121" rx="6.500" fill="#636363"/><rect x="1902.500" y="72" width="12" height="109" rx="6" fill="#878787"/>
<rect x="1669" y="186" width="227" height="13" rx="6.500" fill="#5e5e5e"/><rect x="1669" y="186" width="178" height="13" rx="6.500" fill="#8e8e8e"/>
<!-- outliner header -->
<rect x="1664" y="29" width="254" height="25" fill="url(#gh)"/>
<rect x="1673.500" y="32.500" width="29" height="19" rx="4" fill="url(#gd)" stroke="#333"/>
<path d="M1680 37H1686M1681 37V47M1681 42H1692M1681 47H1692" stroke="#ddd" fill="none" stroke-width="1.500"/><rect x="1678" y="35" width="6" height="2.500" fill="#e89a3c"/><use href="#ud" x="1693" y="42"/>
<text x="1715" y="47">View</text><text x="1760" y="47">Search</text>
<path d="M1918 32.500H1811.500a4 4 0 0 0-4 4V47.500a4 4 0 0 0 4 4H1918z" fill="url(#gd)" stroke="#333"/><text x="1815" y="47" class="w">All Scenes</text>
<path class="hatch" d="M1906 30 L1918 42M1910 30 L1918 38M1664 190 L1678 203M1664 196 L1672 203" style="stroke:#444"/>

<!-- properties -->
<rect x="1664" y="203" width="254" height="1" fill="#000"/>
<rect x="1664" y="204" width="254" height="26" fill="url(#gh)"/>
<rect x="1673.500" y="207.500" width="29" height="19" rx="4" fill="url(#gd)" stroke="#333"/>
<rect x="1678" y="210" width="13" height="5" rx="2" fill="#ddd" stroke="#222"/><rect x="1678" y="218" width="13" height="5" rx="2" fill="#ddd" stroke="#222"/><use href="#ud" x="1693" y="217"/>
<path d="M1711.500 211.500a4 4 0 0 1 4-4H1918V227.500H1715.500a4 4 0 0 1-4-4z" fill="#4a4a4a" stroke="#333"/>
<path d="M1730.500 208V227M1750.500 208V227M1770.500 208V227M1790.500 208V227M1810.500 208V227M1830.500 208V227M1850.500 208V227M1870.500 208V227M1890.500 208V227M1910.500 208V227" stroke="#2e2e2e"/>
<rect x="1891" y="207.500" width="19.500" height="20" fill="#5e8ad4" stroke="#2e2e2e"/>
<use href="#cam" x="1721" y="218"/>
<use href="#eb" x="1741" y="217"/>
<g transform="translate(1761,217)"><circle cx="-3" cy="-5" r="3" fill="#b8b060"/><circle cx="-1" cy="4" r="3.500" fill="#99a"/><rect x="2" y="-6" width="4" height="7" fill="#5b86cf"/></g>
<g transform="translate(1780,217)"><circle r="7" fill="#3d6ea0" stroke="#99a5b8"/><path d="M-4-3 L1-5 2-1 -2 2z" fill="#7ab060"/></g>
<use href="#cube" x="1800" y="217"/>
<g transform="translate(1820,217)"><path d="M-6 4 L-1-1M1 1 L6-4" stroke="#999" stroke-width="4" fill="none"/><path d="M-6 4 L-1-1M1 1 L6-4" stroke="#5a5a5a" stroke-width="1.600" fill="none"/></g>
<path d="M1833 225 L1842 216a4 4 0 0 1 4-6 l-2 3 2 2 3-2a4 4 0 0 1-6 4 L1835 227z" fill="#6f9bd8" stroke="#2a3a55" stroke-width=".6"/>
<use href="#trg" x="1860" y="217"/>
<g transform="translate(1880,217)"><circle r="7" fill="#888"/><path d="M0-7A7 7 0 0 0 0 7z" fill="#c0a090"/><path d="M0-7A7 7 0 0 1 0 7z" fill="#555"/></g>
<use href="#tex" x="1900" y="217"/>
<path class="hatch" d="M1906 205 L1918 217M1910 205 L1918 213" style="stroke:#444"/>
<!-- cut tabs -->
<path d="M1672 230V232a4 4 0 0 0 4 4H1728a4 4 0 0 0 4-4V230z" fill="#484848"/><rect x="1692" y="230" width="20" height="6" fill="#5e8ad4"/>
<circle cx="1682" cy="230" r="5" fill="#5a708a"/><circle cx="1702" cy="230" r="5" fill="#c08a78"/><rect x="1717" y="230" width="10" height="4" fill="#a88"/>
<!-- list box -->
<rect x="1672.500" y="243.500" width="192" height="120.500" rx="4" fill="#727272" stroke="#414141"/>
<rect x="1678" y="271" width="158" height="18" fill="#5a84c8"/>
<g transform="translate(1689,261)"><rect x="-8" y="-9" width="16" height="18" fill="#000"/><rect x="-8" y="-5" width="16" height="8" fill="#8080ff"/><rect x="-8" y="5" width="16" height="3" fill="#7070d0"/></g>
<g transform="translate(1689,281)"><rect x="-8" y="-9" width="16" height="18" fill="#000"/><rect x="-8" y="-5" width="16" height="8" fill="#606060"/><rect x="-8" y="5" width="16" height="3" fill="#505050"/></g>
<text x="1700" y="265">Texture</text><text x="1700" y="285" class="w">Texture.001</text>
<use href="#cb" x="1820" y="253"/><use href="#ck" x="1820" y="253"/><use href="#cb" x="1820" y="273"/><use href="#ck" x="1820" y="273"/>
<use href="#tex" x="1689" y="300"/><use href="#tex" x="1689" y="319"/><use href="#tex" x="1689" y="339"/>
<circle cx="1686" cy="354" r="3.800" fill="#808080" stroke="#4a4a4a"/><path d="M1684 354H1688M1686 352V356" stroke="#444"/>
<path d="M1771 354H1785M1771 356.500H1785" stroke="#2a2a2a"/>
<rect x="1845" y="250" width="15" height="100" rx="7" fill="#606060"/><rect x="1845.500" y="250" width="14" height="27" rx="7" fill="#858585"/>
<path d="M1873.500 247.500a4 4 0 0 1 4-4H1888.500a4 4 0 0 1 4 4V262H1873.500z" fill="url(#gb)" stroke="#333"/><rect x="1873.500" y="262" width="19" height="20" fill="url(#gb)" stroke="#333"/><path d="M1873.500 282H1892.500V297.500a4 4 0 0 1-4 4H1877.500a4 4 0 0 1-4-4z" fill="url(#gd)" stroke="#333"/>
<path d="M1878 255.500L1883 250.500 1888 255.500z" fill="#eee" stroke="#222"/><path d="M1878 270L1883 275 1888 270z" fill="#eee" stroke="#222"/><path d="M1879 288H1887L1884 298H1881z" fill="#ddd"/><path d="M1879 288H1887L1880 296z" fill="#222"/>
<rect x="1902" y="234" width="13" height="700" rx="6.500" fill="#606060"/><rect x="1902.500" y="268" width="12" height="444" rx="6" fill="#868686"/>
<rect x="1915" y="230" width="3" height="710" fill="#7d7d7d"/>
<!-- Texture.001 row -->
<path d="M1672.500 375.500a4 4 0 0 1 4-4H1704V390H1676.500a4 4 0 0 1-4-4z" fill="url(#gd)" stroke="#333"/><use href="#tex" x="1684" y="381"/><use href="#ud" x="1694" y="381"/>
<rect x="1704" y="371.500" width="128" height="18.500" fill="url(#gn)" stroke="#333"/><text x="1710" y="385">Texture.001</text>
<rect x="1832" y="371.500" width="20" height="18.500" fill="#858585" stroke="#333"/><text x="1842" y="385" class="m">F</text>
<rect x="1852" y="371.500" width="21" height="18.500" fill="#858585" stroke="#333"/><use href="#plus" x="1863" y="381"/>
<path d="M1873 371.500H1888a4 4 0 0 1 4 4V386a4 4 0 0 1-4 4H1873z" fill="#858585" stroke="#333"/><use href="#xx" x="1882" y="381"/>
<text x="1679" y="410">Type:</text>
<rect x="1722.500" y="396.500" width="169" height="19" rx="4" fill="url(#gd)" stroke="#333"/><use href="#img" x="1734" y="406"/><text x="1745" y="410" class="w">Image or Movie</text><use href="#ud" x="1883" y="406"/>
<path class="sep" d="M1669 423.500H1896"/>
<use href="#tri" x="1676" y="433"/><text x="1689" y="438">Preview</text><use href="#grip" x="1879" y="433"/>
<!-- preview -->
<rect x="1672.500" y="455.500" width="219" height="111.500" rx="3" fill="#000" stroke="#333"/>
<g fill="#666"><rect x="1673" y="479" width="53" height="58"/><rect x="1728" y="479" width="110" height="58"/><rect x="1840" y="479" width="51" height="58"/></g>
<g fill="#bbb"><rect x="1687" y="485" width="1.500" height="2"/><rect x="1695" y="485" width="1.500" height="2"/><rect x="1756" y="485" width="3" height="2"/><rect x="1765" y="485" width="3" height="2"/><rect x="1800" y="485" width="1.500" height="2"/><rect x="1808" y="485" width="1.500" height="2"/><rect x="1869" y="485" width="3" height="2"/><rect x="1878" y="485" width="3" height="2"/></g>
<g fill="#050505"><rect x="1760" y="506" width="43" height="13"/><rect x="1673" y="506" width="17" height="13"/><rect x="1872" y="506" width="19" height="13"/></g>
<g fill="#0b8a80"><rect x="1764" y="510" width="2" height="5"/><rect x="1770" y="509" width="26" height="3"/><rect x="1772" y="514" width="22" height="2"/><rect x="1675" y="509" width="13" height="2"/><rect x="1675" y="513" width="10" height="2"/><rect x="1875" y="510" width="2" height="5"/><rect x="1881" y="509" width="9" height="3"/></g>
<g fill="#999"><rect x="1696" y="502" width="5" height="2"/><rect x="1696" y="515" width="5" height="2"/><rect x="1808" y="502" width="5" height="2"/><rect x="1808" y="515" width="5" height="2"/></g>
<g fill="#6a6a6a"><rect x="1684" y="547" width="9" height="13"/><rect x="1707" y="547" width="10" height="12"/><circle cx="1742" cy="553" r="7"/><rect x="1756" y="547" width="10" height="13"/><rect x="1773" y="547" width="9" height="13"/><rect x="1797" y="547" width="10" height="13"/><rect x="1820" y="547" width="10" height="12"/><circle cx="1854" cy="553" r="7"/><rect x="1869" y="547" width="10" height="13"/><rect x="1885" y="547" width="6" height="13"/></g>
<path d="M1775 571H1789M1775 573.500H1789" stroke="#2a2a2a"/>
<path d="M1672.500 584.500a4 4 0 0 1 4-4H1744V599.500H1676.500a4 4 0 0 1-4-4z" fill="url(#gs)" stroke="#333"/><rect x="1744" y="580.500" width="74" height="19" fill="url(#gd)" stroke="#333"/><path d="M1818 580.500H1887.500a4 4 0 0 1 4 4V595.500a4 4 0 0 1-4 4H1818z" fill="url(#gd)" stroke="#333"/>
<text x="1708" y="595" class="m">Texture</text><text x="1781" y="595" class="m w">Material</text><text x="1855" y="595" class="m w">Both</text>
<use href="#cb" x="1675" y="607"/><text x="1696" y="619">Show Alpha</text>
<path class="sep" d="M1669 632.500H1896"/>
<path class="ti" d="M1677 642L1686 647 1677 652z"/><text x="1689" y="647">Colors</text><use href="#grip" x="1879" y="642"/>
<path class="sep" d="M1669 656.500H1896"/>
<use href="#tri" x="1676" y="667"/><text x="1689" y="672">Image</text><use href="#grip" x="1879" y="667"/>
<path d="M1672.500 695.500a4 4 0 0 1 4-4H1704V708.500H1676.500a4 4 0 0 1-4-4z" fill="url(#gd)" stroke="#333"/><use href="#img" x="1684" y="700"/><use href="#ud" x="1694" y="700"/>
<rect x="1704" y="691.500" width="128" height="17" fill="url(#gn)" stroke="#333"/><text x="1710" y="703">traveler_radio_d.png</text>
<rect x="1832" y="691.500" width="20" height="17" fill="#858585" stroke="#333"/><text x="1842" y="703" class="m">F</text>
<rect x="1852" y="691.500" width="21" height="17" fill="#858585" stroke="#333"/><path d="M1856 706V696H1860L1862 693H1869V706z" fill="#d8c88a" stroke="#222"/>
<path d="M1873 691.500H1888a4 4 0 0 1 4 4V704.500a4 4 0 0 1-4 4H1873z" fill="#858585" stroke="#333"/><use href="#xx" x="1882" y="700"/>
<text x="1679" y="728">Source:</text>
<rect x="1750.500" y="713.500" width="141" height="19.500" rx="4" fill="url(#gd)" stroke="#333"/><text x="1757" y="728" class="w">Single Image</text><use href="#ud" x="1883" y="723"/>
<path d="M1672.500 743.500a4 4 0 0 1 4-4H1691V758.500H1676.500a4 4 0 0 1-4-4z" fill="#858585" stroke="#333"/><path d="M1675 750L1683 744 1690 750 1683 755z" fill="#d8c88a" stroke="#222"/>
<rect x="1691" y="739.500" width="162" height="19" fill="url(#gn)" stroke="#333"/><text x="1698" y="753">//..\UVs_Image...r_radio_d.png</text>
<rect x="1853" y="739.500" width="19" height="19" fill="#858585" stroke="#333"/><path d="M1856 756V746H1860L1862 743H1869V756z" fill="#d8c88a" stroke="#222"/>
<path d="M1872 739.500H1887.500a4 4 0 0 1 4 4V754.500a4 4 0 0 1-4 4H1872z" fill="#858585" stroke="#333"/><path d="M1876 746a6 5 0 0 1 11-1M1888 752a6 5 0 0 1-11 1M1887 741V746H1882M1876 757V752H1881" stroke="#eee" stroke-width="1.500" fill="none"/>
<text x="1679" y="778">Image: size 8192 x 8192, RGBA byte</text>
<text x="1679" y="803">Color Space:</text>
<rect x="1750.500" y="788.500" width="141" height="19.500" rx="4" fill="url(#gd)" stroke="#333"/><text x="1757" y="803" class="w">sRGB EOTF</text><use href="#ud" x="1883" y="798"/>
<use href="#cb" x="1675" y="813"/><text x="1696" y="824">View as Render</text>
<use href="#cb" x="1675" y="838"/><use href="#ck" x="1675" y="838"/><text x="1696" y="849">Use Alpha</text>
<text x="1679" y="872">Alpha:</text>
<rect x="1750.500" y="857.500" width="141" height="19.500" rx="4" fill="url(#gd)" stroke="#333"/><text x="1757" y="872" class="w">Straight</text><use href="#ud" x="1883" y="867"/>
<use href="#cb" x="1675" y="886"/><text x="1696" y="897">Fields</text>
<path d="M1672.500 908.500a4 4 0 0 1 4-4H1781V923.500H1676.500a4 4 0 0 1-4-4z" fill="#5c79a6" stroke="#4f4f4f"/><path d="M1781 904.500H1887.500a4 4 0 0 1 4 4V919.500a4 4 0 0 1-4 4H1781z" fill="#5c5c5c" stroke="#4f4f4f"/>
<text x="1727" y="919" class="m" style="fill:#33425c">Upper First</text><text x="1836" y="919" class="m" style="fill:#a8a8a8">Lower First</text>
<path class="sep" d="M1669 932.500H1896"/>

<!-- vertical separators -->
<rect x="1663" y="29" width="1" height="911" fill="#000"/>

<!-- top bar (over panels) -->
<rect x="0" y="0" width="1918" height="2" fill="#ed1c24"/>
<rect x="0" y="2" width="1918" height="26" fill="url(#gh)"/>
<rect x="0" y="28" width="1918" height="1" fill="#000"/>
<rect x="6.500" y="6.500" width="29" height="19" rx="4" fill="url(#gd)" stroke="#333"/>
<circle cx="18" cy="16" r="6.500" fill="#3c68ac" stroke="#dfe6f0" stroke-width="1.300"/><rect x="17" y="12" width="2.200" height="2" fill="#fff"/><rect x="17" y="15" width="2.200" height="5" fill="#fff"/><use href="#ud" x="27" y="16"/>
<text x="48" y="21">File</text><text x="86" y="21">Render</text><text x="141" y="21">Window</text><text x="201" y="21">Help</text>
<path d="M238.500 10.500a4 4 0 0 1 4-4H269V25.500H242.500a4 4 0 0 1-4-4z" fill="url(#gd)" stroke="#333"/>
<rect x="243" y="9.500" width="13" height="13" fill="#eee"/><path d="M249.500 9.500V22.500M243 17.500H249M250 19.500H256" stroke="#333"/><use href="#ud" x="259" y="16"/>
<rect x="269" y="6.500" width="119" height="19" fill="url(#gn)" stroke="#333"/><text x="276" y="21">Default</text>
<rect x="388" y="6.500" width="19" height="19" fill="#858585" stroke="#333"/><use href="#plus" x="398" y="16"/>
<path d="M407 6.500H424a4 4 0 0 1 4 4V21.500a4 4 0 0 1-4 4H407z" fill="#858585" stroke="#333"/><use href="#xx" x="417" y="16"/>
<path d="M434.500 10.500a4 4 0 0 1 4-4H465V25.500H438.500a4 4 0 0 1-4-4z" fill="url(#gd)" stroke="#333"/>
<circle cx="441" cy="11" r="2.500" fill="#d8d050"/><circle cx="444" cy="20" r="3.500" fill="#bbb"/><rect x="446" y="10" width="5" height="9" fill="#6f9be0"/><use href="#ud" x="456" y="16"/>
<rect x="465" y="6.500" width="121" height="19" fill="url(#gn)" stroke="#333"/><text x="473" y="21">Scene</text>
<rect x="586" y="6.500" width="20" height="19" fill="#858585" stroke="#333"/><use href="#plus" x="596" y="16"/>
<path d="M606 6.500H622a4 4 0 0 1 4 4V21.500a4 4 0 0 1-4 4H606z" fill="#858585" stroke="#333"/><use href="#xx" x="616" y="16"/>
<rect x="642.500" y="6.500" width="109" height="19" rx="4" fill="url(#gd)" stroke="#333"/><text x="650" y="21" class="w">Blender Render</text><use href="#ud" x="743" y="16"/>
<g transform="translate(780,17)"><circle cx="1" cy="0" r="6" fill="#f08a24" stroke="#3a2000" stroke-width=".7"/><circle cx="1.500" cy="0" r="3.500" fill="#eee"/><circle cx="1.500" cy="0" r="2" fill="#2a5fa8"/><path d="M-8 1 L-2-2 M-4-8 L2-6" stroke="#f08a24" stroke-width="2"/></g>
<text x="797" y="21">v2.78 | Verts:417,871 | Faces:415,849 | Tris:831,708 | Objects:1/4 | Lamps:0/1 | Mem:2736.36M | traveler_radio</text>
<path class="hatch" d="M0 20 L8 28M0 24 L4 28M1906 2 L1918 14M1910 2 L1918 10M966 22 L973 28" style="stroke:#444"/>

<!-- bottom strip -->
<rect x="0" y="934" width="1664" height="1" fill="#000"/>
<rect x="0" y="935" width="285" height="5" fill="#3f3f3f"/>
<rect x="285" y="935" width="1215" height="5" fill="#5f5f5f"/>
<rect x="1500" y="935" width="164" height="5" fill="#3c3c3c"/>
<rect x="284" y="935" width="2.500" height="5" fill="#3fd03f"/>
<path d="M36 935V940M85 935V940M134 935V940M183 935V940M232 935V940M330 935V940M379 935V940M428 935V940M477 935V940M526 935V940M575 935V940M624 935V940M673 935V940M722 935V940M771 935V940M820 935V940M869 935V940M918 935V940M967 935V940M1016 935V940M1065 935V940M1114 935V940M1200 935V940M1249 935V940M1298 935V940M1347 935V940M1396 935V940M1445 935V940M1494 935V940M1543 935V940M1592 935V940" stroke="#777" stroke-width=".7"/>
</svg>
</body></html>
